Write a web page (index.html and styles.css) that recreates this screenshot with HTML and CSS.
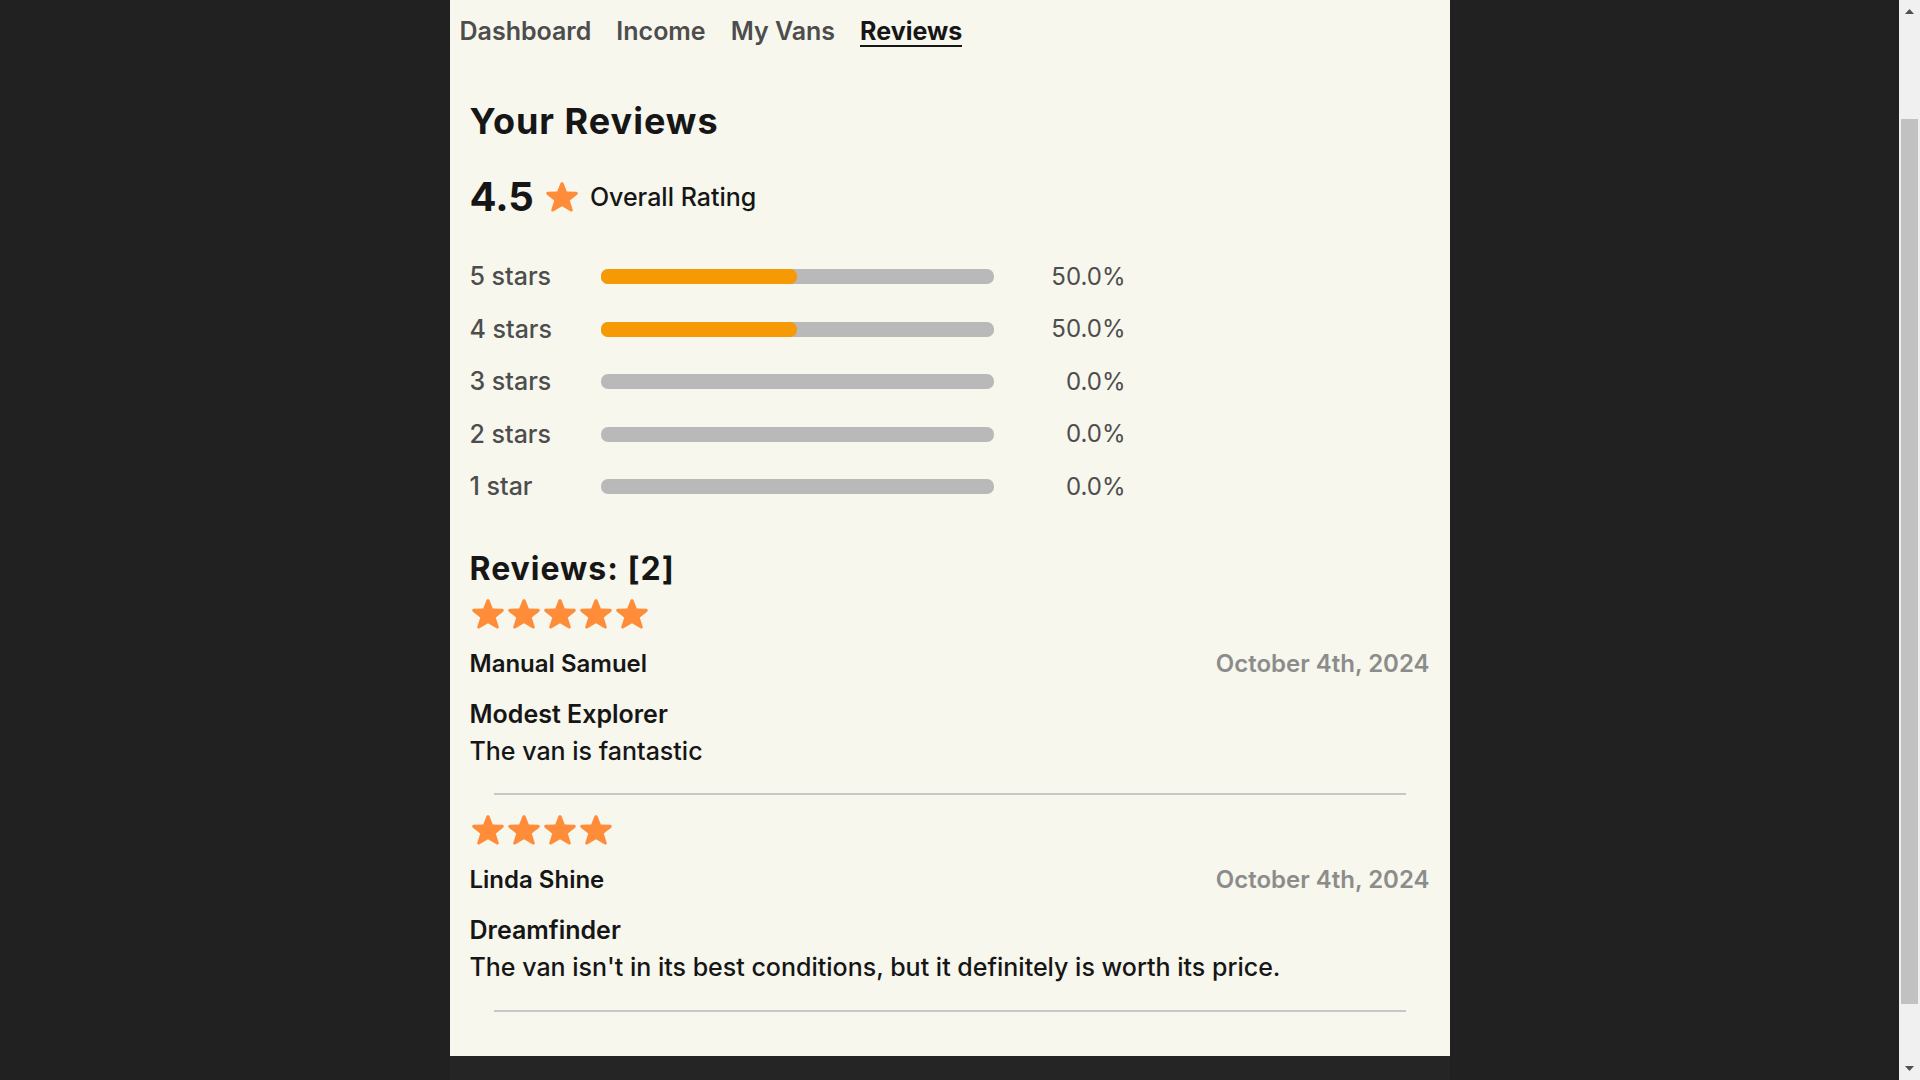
FILE: index.html
```html
<!DOCTYPE html>
<html lang="en">
<head>
<meta charset="utf-8">
<title>Your Reviews</title>
<link rel="stylesheet" href="styles.css">
</head>
<body>
<svg class="sprite" aria-hidden="true">
  <symbol id="star" viewBox="0 0 36 36">
    <path d="M16.3 4.4c.5-1.700 2.900-1.700 3.400 0l3.100 8.100 9.300.2c1.700.1 2.300 1.900 1 3L25.800 21.400l2.900 9.300c.4 1.500-1 2.400-2.300 1.600L18 27.200l-8.400 5.100c-1.300.8-2.700-.1-2.300-1.600l2.900-9.300L2.900 15.700c-1.300-1.100-.7-2.900 1-3l9.300-.2z"/>
  </symbol>
</svg>
<div class="page">
  <div class="app">
    <main class="card">
      <nav class="tabs">
        <a href="#">Dashboard</a>
        <a href="#">Income</a>
        <a href="#">My Vans</a>
        <a href="#" class="active" aria-current="page">Reviews</a>
      </nav>
      <section class="content">
        <h1>Your Reviews</h1>
        <p class="overall"><strong>4.5</strong><svg class="star"><use href="#star"/></svg><span>Overall Rating</span></p>
        <ul class="breakdown">
          <li><span>5 stars</span><span class="bar"><span class="fill" style="width:50%"></span></span><span class="percent">50.0%</span></li>
          <li><span>4 stars</span><span class="bar"><span class="fill" style="width:50%"></span></span><span class="percent">50.0%</span></li>
          <li><span>3 stars</span><span class="bar"></span><span class="percent">0.0%</span></li>
          <li><span>2 stars</span><span class="bar"></span><span class="percent">0.0%</span></li>
          <li><span>1 star</span><span class="bar"></span><span class="percent">0.0%</span></li>
        </ul>
        <h2>Reviews: [2]</h2>
        <article class="review">
          <div class="stars"><svg class="star"><use href="#star"/></svg><svg class="star"><use href="#star"/></svg><svg class="star"><use href="#star"/></svg><svg class="star"><use href="#star"/></svg><svg class="star"><use href="#star"/></svg></div>
          <div class="byline"><span>Manual Samuel</span><time datetime="2024-10-04">October 4th, 2024</time></div>
          <h3>Modest Explorer</h3>
          <p>The van is fantastic</p>
          <hr>
        </article>
        <article class="review">
          <div class="stars"><svg class="star"><use href="#star"/></svg><svg class="star"><use href="#star"/></svg><svg class="star"><use href="#star"/></svg><svg class="star"><use href="#star"/></svg></div>
          <div class="byline"><span>Linda Shine</span><time datetime="2024-10-04">October 4th, 2024</time></div>
          <h3>Dreamfinder</h3>
          <p>The van isn't in its best conditions, but it definitely is worth its price.</p>
          <hr>
        </article>
      </section>
    </main>
    <footer class="footer"></footer>
  </div>
  <div class="scrollbar" aria-hidden="true">
    <svg class="arrow" viewBox="0 0 9 5"><path d="M0 5 4.500 0 9 5z"/></svg>
    <div class="track"><div class="thumb"></div></div>
    <svg class="arrow" viewBox="0 0 9 5"><path d="M0 0 4.500 5 9 0z"/></svg>
  </div>
</div>
</body>
</html>
```
FILE: styles.css
```css
* { box-sizing: border-box; }

body {
  margin: 0;
  background: #212121;
  color: #161616;
  font: 500 25px/1.5 Inter, "Liberation Sans", sans-serif;
}

h1, h2, h3, p, ul { margin: 0; padding: 0; }

.sprite { display: none; }

.page {
  display: grid;
  grid-template-columns: minmax(0, 1fr) 21px;
  height: 100vh;
  overflow: hidden;
}

.app {
  display: flex;
  flex-direction: column;
  width: 100%;
  max-width: 1000px;
  margin: 0 auto;
}

.card { background: #f7f7ed; padding-bottom: 32px; }
.footer { flex: 1; background: #252525; }

.tabs { display: flex; align-items: flex-start; gap: 25px; padding: 17px 10px 0; }

.tabs a {
  color: #4d4d4d;
  font-weight: 600;
  line-height: 28px;
  text-decoration: none;
}

.tabs .active {
  color: #161616;
  font-weight: 700;
  border-bottom: 2px solid #161616;
}

.content { padding: 47px 20px 0; }

h1 { font-size: 36px; line-height: 54px; font-weight: 700; letter-spacing: 1px; }

.overall { display: flex; align-items: center; gap: 10px; margin-top: 19px; line-height: 60px; }
.overall strong { font-size: 40px; font-weight: 700; }

.star { display: block; width: 36px; height: 36px; fill: #ff8c38; }

.breakdown {
  display: grid;
  gap: 15px;
  width: 656px;
  max-width: 100%;
  margin-top: 31px;
  list-style: none;
  color: #4d4d4d;
}

.breakdown li { display: grid; grid-template-columns: 1fr 3fr 1fr; align-items: center; }
.bar { height: 15px; border-radius: 7px; background: #b9b9b9; }
.fill { display: block; height: 100%; border-radius: 7px; background: #f59a04; }
.percent { font-size: 24px; font-weight: 400; text-align: right; }

h2 { margin-top: 40px; font-size: 32px; line-height: 45px; font-weight: 700; letter-spacing: 1px; }

.stars { display: flex; height: 46px; align-items: center; }

.byline { display: flex; justify-content: space-between; margin: 8px 0 13px; font-size: 24px; line-height: 37px; font-weight: 600; }
.byline time { color: #8c8c8c; }

h3 { font-size: 25px; line-height: 38px; font-weight: 600; }

hr { height: 2px; margin: 23px 24px 12px; border: 0; background: #c7c7c7; }

.scrollbar {
  display: flex;
  flex-direction: column;
  align-items: center;
  justify-content: space-between;
  padding: 9px 0;
  background: #f0f0f0;
}

.arrow { width: 9px; height: 5px; fill: #505050; }
.track { flex: 1; width: 17px; padding: 105px 0 62px; }
.thumb { height: 100%; background: #c1c1c1; }
```
